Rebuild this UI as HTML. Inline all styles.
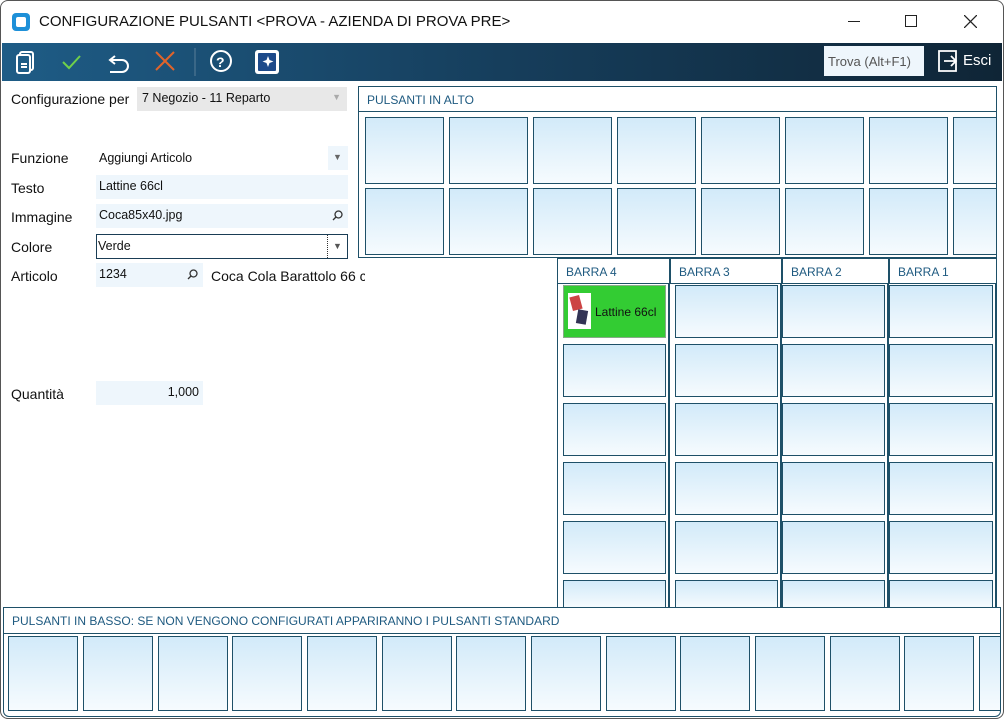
<!DOCTYPE html>
<html><head><meta charset="utf-8"><style>
*{box-sizing:border-box;margin:0;padding:0}
body{width:1004px;height:719px;background:#fff;font-family:"Liberation Sans",sans-serif;font-size:13px;color:#111;position:relative;overflow:hidden}
.a{position:absolute}
.btn{position:absolute;border:1px solid #1e5068;background:linear-gradient(#d2eaf9,#f6fbfe)}
.hdr{position:absolute;border:1px solid #1e5068;color:#1e5a80;font-size:12px;padding:6px 8px;background:#fff}
.lbl{position:absolute;font-size:14px}
.fld{position:absolute;background:#eef6fc;font-size:12.5px;padding:4px 3px;height:24px}
.mg{position:absolute;right:5px;top:6px}
</style></head><body>
<div class="a" style="left:0;top:0;width:1004px;height:719px;border:1px solid #555;border-radius:8px"></div>
<div class="a" style="left:12px;top:13px;width:18px;height:18px;background:#1e90d8;border-radius:4px"><div class="a" style="left:4px;top:4px;width:10px;height:10px;background:#fff;border-radius:2px"></div></div>
<div class="a" style="left:39px;top:13px;font-size:15px">CONFIGURAZIONE PULSANTI &lt;PROVA - AZIENDA DI PROVA PRE&gt;</div>
<div class="a" style="left:848px;top:21px;width:12px;height:1px;background:#222"></div>
<div class="a" style="left:905px;top:15px;width:12px;height:12px;border:1px solid #222"></div>
<svg class="a" style="left:964px;top:15px" width="13" height="13" stroke="#222" stroke-width="1.3"><path d="M0 0L13 13M13 0L0 13"/></svg>
<div class="a" style="left:2px;top:43px;width:1000px;height:38px;background:linear-gradient(90deg,#1e5c86,#163e5c 50%,#0f2536)"></div>
<svg class="a" style="left:14px;top:48px" width="280" height="28" viewBox="0 0 280 28" fill="none" stroke-width="2">
<rect x="6" y="4" width="13" height="18" rx="2" stroke="#fff"/><rect x="3" y="7" width="13" height="18" rx="2" stroke="#fff" fill="#1e5c86"/><path d="M7 16h6M7 19h6" stroke="#fff"/>
<path d="M49 14l6 6 11-12" stroke="#6fd04a"/>
<path d="M101 8l-5 4 5 4M96 12h12a6 6 0 0 1 0 12h-12" stroke="#fff"/>
<path d="M142 4l18 18M160 4l-18 18" stroke="#e0642a"/>
<line x1="181" y1="0" x2="181" y2="28" stroke="#5a7e98" stroke-width="1"/>
<circle cx="207" cy="13" r="10" stroke="#fff"/><text x="202" y="19" fill="#fff" stroke="none" font-size="14" font-weight="bold" font-family="Liberation Sans">?</text>
<rect x="241" y="2" width="24" height="24" rx="3" fill="#fff" stroke="none"/><rect x="244" y="5" width="18" height="18" rx="1" fill="#1d4a8a" stroke="none"/><path d="M254 8l1.5 4 4 1.5-4 1.5-1.5 4-1.5-4-4-1.5 4-1.5z" fill="#fff" stroke="none"/>
</svg>
<div class="a" style="left:824px;top:46px;width:100px;height:30px;background:#eef6fc;color:#555;font-size:13px;padding:8px 4px">Trova (Alt+F1)</div>
<svg class="a" style="left:936px;top:49px" width="24" height="24" fill="none" stroke="#fff" stroke-width="1.8"><path d="M9 2H3v20h6M3 2h17v20H3"/><path d="M8 12h12M15 7l5 5-5 5"/></svg>
<div class="a" style="left:963px;top:52px;color:#fff;font-size:15px">Esci</div>

<div class="lbl" style="left:11px;top:91px">Configurazione per</div>
<div class="a" style="left:137px;top:87px;width:210px;height:24px;background:#e8e8e8;font-size:12.5px;padding:4px 5px">7 Negozio - 11 Reparto<span style="position:absolute;right:6px;top:5px;color:#aaa;font-size:9px">▼</span></div>
<div class="lbl" style="left:11px;top:150px">Funzione</div>
<div class="a" style="left:96px;top:147px;font-size:12.5px;padding:4px 3px">Aggiungi Articolo</div>
<div class="a" style="left:328px;top:146px;width:20px;height:24px;background:#eef6fc;color:#666;font-size:9px;padding:6px 5px">▼</div>
<div class="lbl" style="left:11px;top:180px">Testo</div>
<div class="fld" style="left:96px;top:175px;width:252px">Lattine 66cl</div>
<div class="lbl" style="left:11px;top:209px">Immagine</div>
<div class="fld" style="left:96px;top:204px;width:252px">Coca85x40.jpg<svg class="mg" width="11" height="11" fill="none" stroke="#333" stroke-width="1.3"><circle cx="6.5" cy="4.5" r="3.5"/><path d="M4 7L1 10"/></svg></div>
<div class="lbl" style="left:11px;top:239px">Colore</div>
<div class="a" style="left:96px;top:234px;width:252px;height:25px;border:1px solid #1a3d55;font-size:12.5px;padding:4px 1px">Verde<span style="position:absolute;right:0;top:0;width:20px;height:23px;border-left:1px dotted #333;color:#555;font-size:9px;padding:6px 5px">▼</span></div>
<div class="lbl" style="left:11px;top:268px">Articolo</div>
<div class="fld" style="left:96px;top:263px;width:107px">1234<svg class="mg" width="11" height="11" fill="none" stroke="#333" stroke-width="1.3"><circle cx="6.5" cy="4.5" r="3.5"/><path d="M4 7L1 10"/></svg></div>
<div class="a" style="left:211px;top:268px;font-size:14px;width:154px;white-space:nowrap;overflow:hidden">Coca Cola Barattolo 66 cl</div>
<div class="lbl" style="left:11px;top:386px">Quantità</div>
<div class="fld" style="left:96px;top:381px;width:107px;text-align:right;padding-right:4px">1,000</div>

<div class="a" style="left:358px;top:86px;width:639px;height:172px;border:1px solid #1e5068;overflow:hidden">
<div class="hdr" style="left:-1px;top:-1px;width:639px;height:26px">PULSANTI IN ALTO</div>
<div class="btn" style="left:6px;top:30px;width:79px;height:67px"></div><div class="btn" style="left:90px;top:30px;width:79px;height:67px"></div><div class="btn" style="left:174px;top:30px;width:79px;height:67px"></div><div class="btn" style="left:258px;top:30px;width:79px;height:67px"></div><div class="btn" style="left:342px;top:30px;width:79px;height:67px"></div><div class="btn" style="left:426px;top:30px;width:79px;height:67px"></div><div class="btn" style="left:510px;top:30px;width:79px;height:67px"></div><div class="btn" style="left:594px;top:30px;width:79px;height:67px"></div>
<div class="btn" style="left:6px;top:101px;width:79px;height:67px"></div><div class="btn" style="left:90px;top:101px;width:79px;height:67px"></div><div class="btn" style="left:174px;top:101px;width:79px;height:67px"></div><div class="btn" style="left:258px;top:101px;width:79px;height:67px"></div><div class="btn" style="left:342px;top:101px;width:79px;height:67px"></div><div class="btn" style="left:426px;top:101px;width:79px;height:67px"></div><div class="btn" style="left:510px;top:101px;width:79px;height:67px"></div><div class="btn" style="left:594px;top:101px;width:79px;height:67px"></div>
</div>

<div class="a" style="left:557px;top:258px;width:440px;height:350px;overflow:hidden">
<div class="a" style="left:0;top:0;width:113px;height:350px;border:1px solid #1e5068;border-width:0 2px 0 1px"></div>
<div class="a" style="left:113px;top:0;width:112px;height:350px;border-right:2px solid #1e5068"></div>
<div class="a" style="left:225px;top:0;width:107px;height:350px;border-right:2px solid #1e5068"></div>
<div class="a" style="left:332px;top:0;width:108px;height:350px;border-right:2px solid #1e5068"></div>
<div class="hdr" style="left:0;top:0;width:113px;height:26px">BARRA 4</div>
<div class="hdr" style="left:113px;top:0;width:112px;height:26px">BARRA 3</div>
<div class="hdr" style="left:225px;top:0;width:107px;height:26px">BARRA 2</div>
<div class="hdr" style="left:332px;top:0;width:108px;height:26px">BARRA 1</div>
</div>
<div class="a" style="left:563px;top:285px;width:103px;height:53px;background:#33cc33;border:1px solid #8a8;"><div class="a" style="left:4px;top:7px;width:23px;height:36px;background:#fff"><div class="a" style="left:3px;top:3px;width:10px;height:14px;background:#c44;transform:rotate(-15deg)"></div><div class="a" style="left:9px;top:17px;width:10px;height:14px;background:#335;transform:rotate(10deg)"></div></div><div class="a" style="left:31px;top:19px;font-size:12px">Lattine 66cl</div></div>
<div class="btn" style="left:675px;top:285px;width:103px;height:53px"></div><div class="btn" style="left:782px;top:285px;width:103px;height:53px"></div><div class="btn" style="left:889px;top:285px;width:104px;height:53px"></div>
<div class="btn" style="left:563px;top:344px;width:103px;height:53px"></div><div class="btn" style="left:675px;top:344px;width:103px;height:53px"></div><div class="btn" style="left:782px;top:344px;width:103px;height:53px"></div><div class="btn" style="left:889px;top:344px;width:104px;height:53px"></div>
<div class="btn" style="left:563px;top:403px;width:103px;height:53px"></div><div class="btn" style="left:675px;top:403px;width:103px;height:53px"></div><div class="btn" style="left:782px;top:403px;width:103px;height:53px"></div><div class="btn" style="left:889px;top:403px;width:104px;height:53px"></div>
<div class="btn" style="left:563px;top:462px;width:103px;height:53px"></div><div class="btn" style="left:675px;top:462px;width:103px;height:53px"></div><div class="btn" style="left:782px;top:462px;width:103px;height:53px"></div><div class="btn" style="left:889px;top:462px;width:104px;height:53px"></div>
<div class="btn" style="left:563px;top:521px;width:103px;height:53px"></div><div class="btn" style="left:675px;top:521px;width:103px;height:53px"></div><div class="btn" style="left:782px;top:521px;width:103px;height:53px"></div><div class="btn" style="left:889px;top:521px;width:104px;height:53px"></div>
<div class="btn" style="left:563px;top:580px;width:103px;height:28px;border-bottom:0"></div><div class="btn" style="left:675px;top:580px;width:103px;height:28px;border-bottom:0"></div><div class="btn" style="left:782px;top:580px;width:103px;height:28px;border-bottom:0"></div><div class="btn" style="left:889px;top:580px;width:104px;height:28px;border-bottom:0"></div>

<div class="a" style="left:3px;top:607px;width:998px;height:110px;border:1px solid #1e5068;border-radius:0 0 6px 6px;overflow:hidden;background:#fff">
<div class="hdr" style="left:-1px;top:-1px;width:998px;height:27px;font-size:12px">PULSANTI IN BASSO: SE NON VENGONO CONFIGURATI APPARIRANNO I PULSANTI STANDARD</div>
<div class="btn" style="left:4px;top:28px;width:70px;height:75px"></div><div class="btn" style="left:79px;top:28px;width:70px;height:75px"></div><div class="btn" style="left:154px;top:28px;width:70px;height:75px"></div><div class="btn" style="left:228px;top:28px;width:70px;height:75px"></div><div class="btn" style="left:303px;top:28px;width:70px;height:75px"></div><div class="btn" style="left:378px;top:28px;width:70px;height:75px"></div><div class="btn" style="left:452px;top:28px;width:70px;height:75px"></div><div class="btn" style="left:527px;top:28px;width:70px;height:75px"></div><div class="btn" style="left:602px;top:28px;width:70px;height:75px"></div><div class="btn" style="left:676px;top:28px;width:70px;height:75px"></div><div class="btn" style="left:751px;top:28px;width:70px;height:75px"></div><div class="btn" style="left:826px;top:28px;width:70px;height:75px"></div><div class="btn" style="left:900px;top:28px;width:70px;height:75px"></div><div class="btn" style="left:975px;top:28px;width:70px;height:75px"></div>
</div>
</body></html>
